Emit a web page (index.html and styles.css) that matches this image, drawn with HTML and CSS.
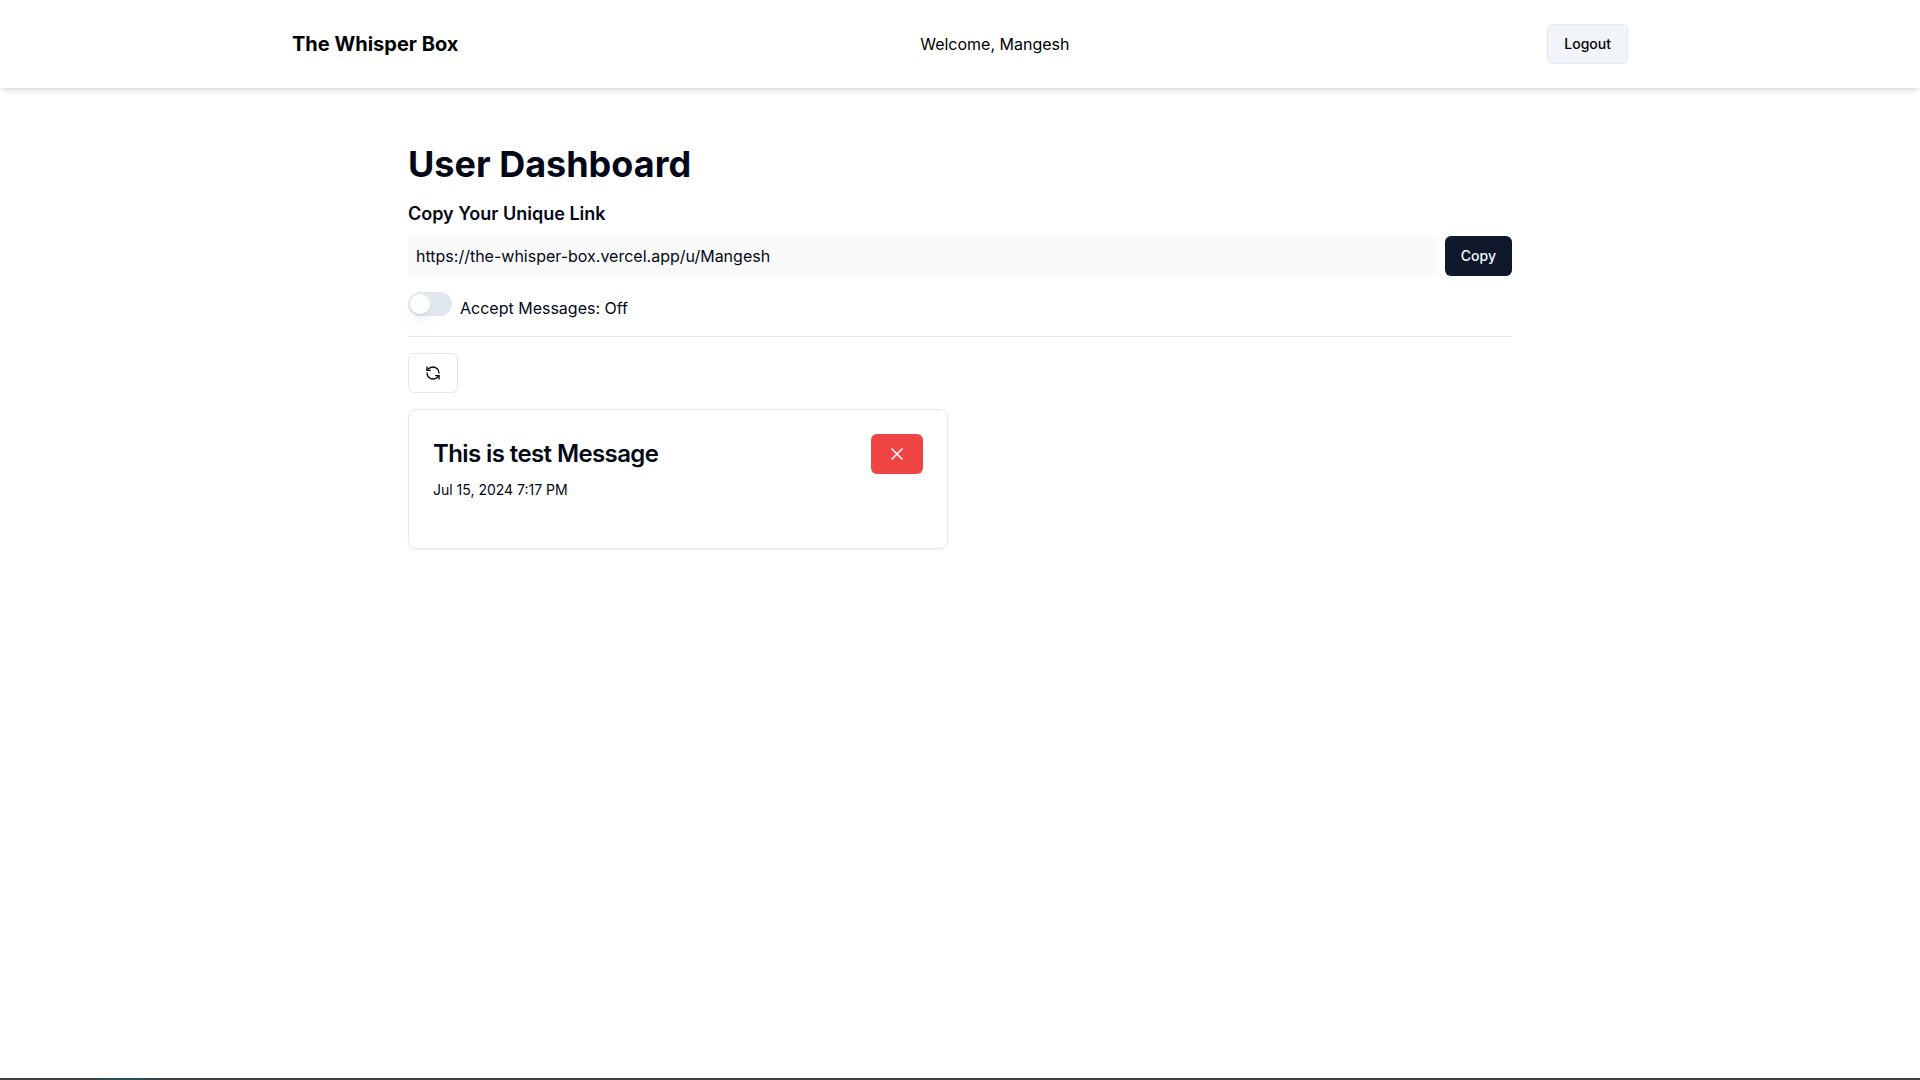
FILE: index.html
```html
<!DOCTYPE html>
<html lang="en">
<head>
  <meta charset="utf-8">
  <meta name="viewport" content="width=device-width, initial-scale=1">
  <title>The Whisper Box</title>
  <link rel="stylesheet" href="styles.css">
</head>
<body>
  <header class="navbar">
    <div class="navbar-inner">
      <a class="brand" href="#">The Whisper Box</a>
      <span class="welcome">Welcome, Mangesh</span>
      <button class="btn btn-muted" type="button">Logout</button>
    </div>
  </header>

  <main class="dashboard">
    <h1 class="title">User Dashboard</h1>

    <section class="link-section">
      <h2 class="subtitle"><label for="profile-url">Copy Your Unique Link</label></h2>
      <div class="link-row">
        <input class="link-input" id="profile-url" type="text" value="https://the-whisper-box.vercel.app/u/Mangesh" readonly>
        <button class="btn btn-primary" type="button">Copy</button>
      </div>
    </section>

    <div class="accept-row">
      <input class="switch" id="accept" type="checkbox" role="switch">
      <label class="accept-label" for="accept">Accept Messages: Off</label>
    </div>

    <hr class="separator">

    <button class="btn btn-outline" type="button" aria-label="Refresh messages">
      <svg class="icon" viewBox="0 0 24 24" aria-hidden="true">
        <path d="M21 12a9 9 0 0 0-9-9 9.75 9.75 0 0 0-6.74 2.74L3 8"/>
        <path d="M3 3v5h5"/>
        <path d="M3 12a9 9 0 0 0 9 9 9.75 9.75 0 0 0 6.74-2.74L21 16"/>
        <path d="M16 16h5v5"/>
      </svg>
    </button>

    <div class="messages">
      <article class="card">
        <div class="card-head">
          <h3 class="card-title">This is test Message</h3>
          <button class="btn btn-danger" type="button" aria-label="Delete message">
            <svg class="icon icon-large" viewBox="0 0 24 24" aria-hidden="true">
              <path d="M18 6 6 18"/>
              <path d="m6 6 12 12"/>
            </svg>
          </button>
        </div>
        <time class="card-date" datetime="2024-07-15T19:17">Jul 15, 2024 7:17 PM</time>
      </article>
    </div>
  </main>

  <div class="taskbar"><span class="taskbar-active"></span></div>
</body>
</html>
```
FILE: styles.css
```css
*,
*::before,
*::after {
  box-sizing: border-box;
}

body {
  display: flex;
  flex-direction: column;
  min-height: 100vh;
  margin: 0;
  background: #fff;
  color: #020817;
  font-family: Inter, "Liberation Sans", sans-serif;
  font-size: 16px;
  line-height: 24px;
}

h1,
h2,
h3 {
  margin: 0;
}

.navbar {
  padding: 24px;
  box-shadow: 0 4px 6px -1px rgb(0 0 0 / 0.1), 0 2px 4px -2px rgb(0 0 0 / 0.1);
  color: #000;
}

.navbar-inner {
  display: flex;
  align-items: center;
  justify-content: space-between;
  max-width: 1400px;
  margin: 0 auto;
  padding: 0 32px;
}

.brand {
  color: inherit;
  font-size: 20px;
  font-weight: 700;
  line-height: 28px;
  text-decoration: none;
}

.welcome {
  margin-right: 16px;
}

.btn {
  display: inline-flex;
  align-items: center;
  justify-content: center;
  height: 40px;
  padding: 0 16px;
  border: 0;
  border-radius: 6px;
  font-family: inherit;
  font-size: 14px;
  font-weight: 500;
  line-height: 20px;
  cursor: pointer;
}

.btn-muted {
  border: 1px solid #e2e8f0;
  background: #f1f5f9;
  color: #000;
}

.btn-primary {
  background: #0f172a;
  color: #f8fafc;
}

.btn-outline {
  margin-top: 16px;
  border: 1px solid #e2e8f0;
  background: #fff;
  color: #020817;
}

.btn-danger {
  background: #ef4444;
  color: #f8fafc;
}

.icon {
  width: 16px;
  height: 16px;
  fill: none;
  stroke: currentColor;
  stroke-width: 2;
  stroke-linecap: round;
  stroke-linejoin: round;
}

.icon-large {
  width: 20px;
  height: 20px;
}

.dashboard {
  width: 100%;
  max-width: 1152px;
  margin: 32px auto;
  padding: 24px;
}

.title {
  margin-bottom: 16px;
  font-size: 36px;
  font-weight: 700;
  line-height: 40px;
}

.link-section {
  margin-bottom: 16px;
}

.subtitle {
  margin-bottom: 8px;
  font-size: 18px;
  font-weight: 600;
  line-height: 28px;
}

.link-row {
  display: flex;
  align-items: center;
  gap: 8px;
}

.link-input {
  flex: 1;
  min-width: 0;
  height: 40px;
  padding: 8px;
  border: 0;
  background: #fafafa;
  color: inherit;
  font: inherit;
}

.accept-row {
  display: flex;
  gap: 8px;
  margin-bottom: 16px;
}

.switch {
  appearance: none;
  width: 44px;
  height: 24px;
  margin: 0;
  padding: 2px;
  border-radius: 12px;
  background: #e2e8f0;
  cursor: pointer;
}

.switch::before {
  content: "";
  display: block;
  width: 20px;
  height: 20px;
  border-radius: 50%;
  background: #fff;
  box-shadow: 0 10px 15px -3px rgb(0 0 0 / 0.1), 0 4px 6px -4px rgb(0 0 0 / 0.1);
}

.switch:checked {
  background: #0f172a;
}

.switch:checked::before {
  margin-left: 20px;
}

.accept-label {
  padding-top: 4px;
}

.separator {
  height: 1px;
  margin: 0;
  border: 0;
  background: #e2e8f0;
}

.messages {
  display: grid;
  grid-template-columns: repeat(2, minmax(0, 1fr));
  gap: 24px;
  margin-top: 16px;
}

.card {
  padding: 24px 24px 48px;
  border: 1px solid #e2e8f0;
  border-radius: 8px;
  box-shadow: 0 1px 2px rgb(0 0 0 / 0.05);
}

.card-head {
  display: flex;
  align-items: center;
  justify-content: space-between;
  margin-bottom: 6px;
}

.card-title {
  font-size: 24px;
  font-weight: 600;
  line-height: 24px;
  letter-spacing: -0.025em;
}

.card-date {
  display: block;
  font-size: 14px;
  line-height: 20px;
}

/* Strip along the bottom edge of the window */
.taskbar {
  display: flex;
  height: 2px;
  margin-top: auto;
  padding-left: 98px;
  background: #3a4447;
}

.taskbar-active {
  width: 50px;
  background: #2a4d53;
}
```
